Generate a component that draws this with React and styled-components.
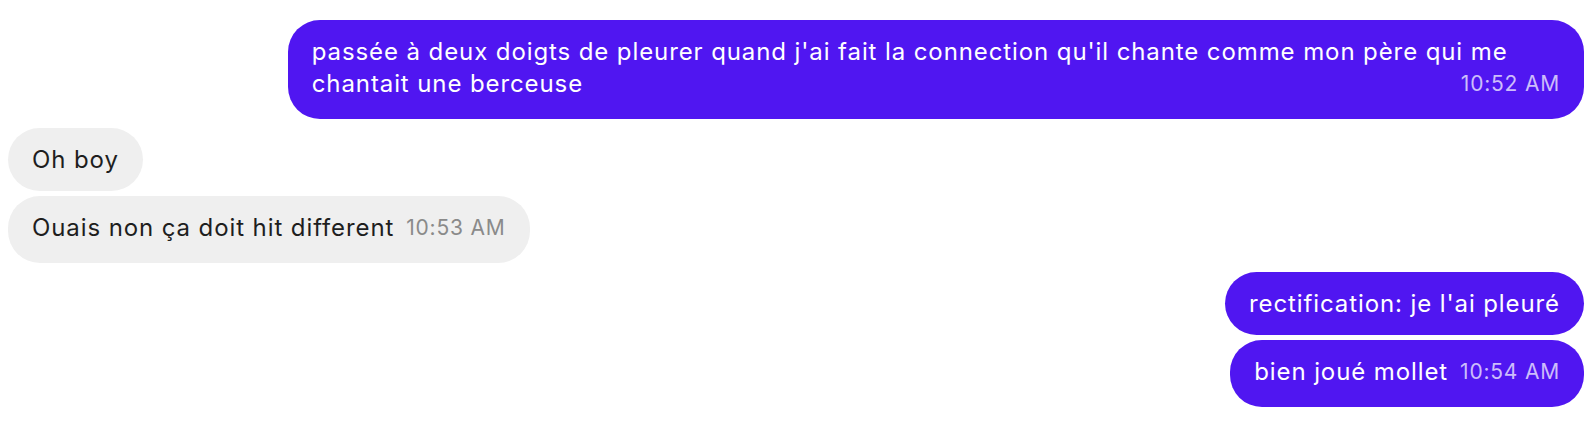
import React from 'react'
import styled, { createGlobalStyle } from 'styled-components'

const messages = [
  {
    id: 1,
    sender: 'me',
    text: "passée à deux doigts de pleurer quand j'ai fait la connection qu'il chante comme mon père qui me chantait une berceuse",
    time: '10:52 AM',
  },
  { id: 2, sender: 'them', text: 'Oh boy' },
  { id: 3, sender: 'them', text: 'Ouais non ça doit hit different', time: '10:53 AM' },
  { id: 4, sender: 'me', text: "rectification: je l'ai pleuré" },
  { id: 5, sender: 'me', text: 'bien joué mollet', time: '10:54 AM' },
]

// group consecutive messages from the same sender
const groupMessages = (list) => {
  const groups = []
  list.forEach((msg) => {
    const last = groups[groups.length - 1]
    if (last && last.sender === msg.sender) {
      last.items.push(msg)
    } else {
      groups.push({ sender: msg.sender, items: [msg] })
    }
  })
  return groups
}

function App() {
  const groups = groupMessages(messages)

  return (
    <>
      <GlobalStyle />
      <Thread>
        {groups.map((group, gi) => (
          <Group key={gi} $mine={group.sender === 'me'}>
            {group.items.map((msg) => (
              <Bubble key={msg.id} $mine={msg.sender === 'me'}>
                {msg.text}
                {msg.time && <Time $mine={msg.sender === 'me'}>{msg.time}</Time>}
              </Bubble>
            ))}
          </Group>
        ))}
      </Thread>
    </>
  )
}

export default App

const GlobalStyle = createGlobalStyle`
  * {
    box-sizing: border-box;
  }
  body {
    margin: 0;
    background: #ffffff;
    font-family: Inter, "Noto Sans", sans-serif;
  }
`

const Thread = styled.div`
  display: flex;
  flex-direction: column;
  gap: 9px;
  padding: 20px 12px 0 8px;
`

const Group = styled.div`
  display: flex;
  flex-direction: column;
  gap: 5px;
  align-items: ${({ $mine }) => ($mine ? 'flex-end' : 'flex-start')};
`

const Bubble = styled.div`
  display: flow-root;
  max-width: 82.25%;
  padding: 15.5px 24px;
  border-radius: 32px;
  font-size: 24px;
  line-height: 32px;
  letter-spacing: 0.9px;
  background: ${({ $mine }) => ($mine ? '#5016f1' : '#efefef')};
  color: ${({ $mine }) => ($mine ? '#ffffff' : '#1e1e1e')};
`

const Time = styled.span`
  float: right;
  margin-left: 12px;
  padding-bottom: 4px;
  font-size: 21px;
  line-height: 32px;
  letter-spacing: 0.8px;
  color: ${({ $mine }) => ($mine ? 'rgba(255, 255, 255, 0.72)' : '#8a8a8a')};
`
